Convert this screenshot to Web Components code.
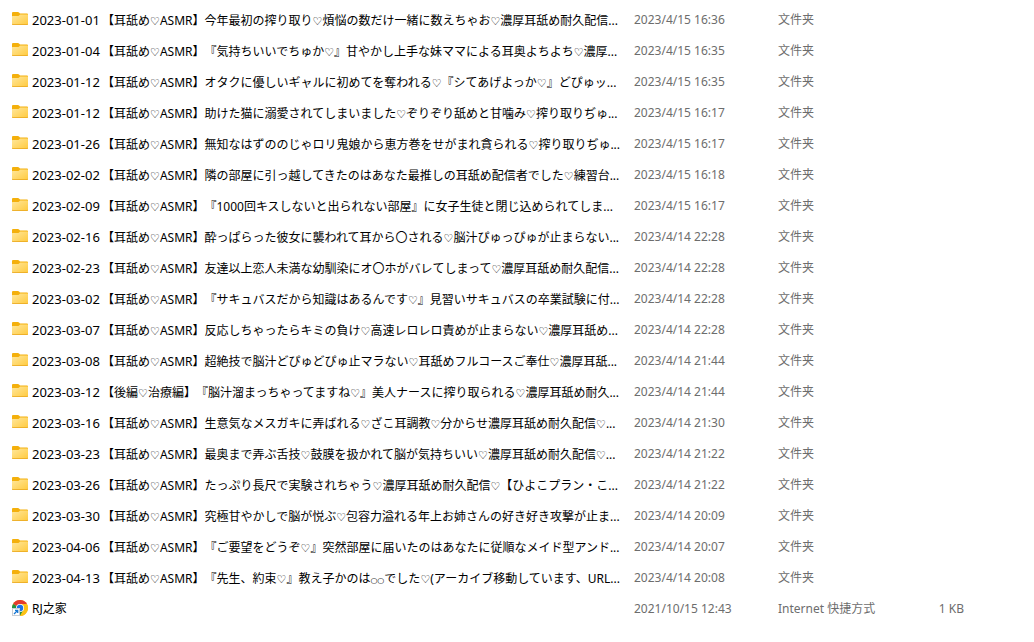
<!DOCTYPE html>
<html lang="zh-CN">
<head>
<meta charset="utf-8">
<title>文件夹</title>
<style>
  body {
    margin: 0;
    background: #fff;
    color: #000;
    font: 12px/16px "Noto Sans", "Noto Sans CJK SC", sans-serif;
  }
</style>
</head>
<body>
<file-list></file-list>

<template id="folder-icon">
  <style>
    :host { display: block; width: 16px; height: 16px; }
    svg { display: block; }
  </style>
  <svg width="16" height="16" viewBox="0 0 16 16" aria-hidden="true">
    <defs>
      <linearGradient id="g" x1="0" y1="0" x2="1" y2="1">
        <stop offset="0" stop-color="#ffe79c"/>
        <stop offset="1" stop-color="#ffca3e"/>
      </linearGradient>
    </defs>
    <path d="M0 2Q0 1 1 1H6Q6.600 1 7 1.500L8 2.500H15Q16 2.500 16 3.500V8H0Z" fill="#f4b00c"/>
    <path d="M0 5.500Q0 5 .5 5H6.500L8.200 3.500H15.500Q16 3.500 16 4V13Q16 14 15 14H1Q0 14 0 13Z" fill="url(#g)"/>
    <path d="M0 12.600Q.2 13.200 1 13.200H15Q15.800 13.200 16 12.600V13Q16 14 15 14H1Q0 14 0 13Z" fill="#e9a71e"/>
  </svg>
</template>

<template id="shortcut-icon">
  <style>
    :host { display: block; width: 16px; height: 16px; }
    svg { display: block; }
  </style>
  <svg width="16" height="16" viewBox="0 0 16 16" aria-hidden="true">
    <circle cx="8" cy="8" r="8" fill="#fbc116"/>
    <path d="M8 8L1.070 4A8 8 0 0 1 14.930 4Z" fill="#e33b2e"/>
    <path d="M8 8L1.070 4A8 8 0 0 0 8 16L11.460 10Z" fill="#229342"/>
    <path d="M8 4H14.930A8 8 0 0 1 8 16L11.460 10Z" fill="#fbc116"/>
    <circle cx="8" cy="8" r="4" fill="#fff"/>
    <circle cx="8" cy="8" r="3.200" fill="#1a73e8"/>
    <rect x=".5" y="8.500" width="7" height="7" fill="#fff" stroke="#c9cdd2"/>
    <path d="M2 14L5.500 10.500M3 10.300H5.700V13" fill="none" stroke="#1677d2" stroke-width="1.300"/>
  </svg>
</template>

<template id="file-name">
  <style>
    :host { display: flex; align-items: center; height: 31px; min-width: 0; white-space: nowrap; }
    .icon { flex: none; width: 20px; }
    .icon ::slotted(*) { margin-bottom: 2px; }
    .text { display: flex; align-items: baseline; min-width: 0; height: 16px; }
    .date { flex: none; width: 70px; font-size: 13px; }
    .title {
      overflow: hidden;
      font-family: "Noto Sans", "Noto Sans CJK JP", sans-serif;
      text-spacing-trim: space-all;
    }
    .heart, .ring { font-family: "DejaVu Sans", sans-serif; line-height: 8px; }
    .heart { font-size: 11px; }
    .ring { font-size: 8px; }
  </style>
  <span class="icon"><slot name="icon"></slot></span>
  <span class="text"><span class="date"></span><span class="title" lang="ja"></span></span>
</template>

<template id="file-list">
  <style>
    :host { display: block; padding: 4px 70px 16px 12px; }
    table { width: 100%; table-layout: fixed; border-collapse: collapse; }
    .c-date { width: 144px; }
    .c-type { width: 120px; }
    .c-size { width: 66px; }
    td { height: 31px; padding: 0; color: #6d6d6d; white-space: nowrap; vertical-align: middle; }
    td:first-child { color: #000; }
    td:last-child { text-align: right; }
  </style>
  <table>
    <colgroup><col><col class="c-date"><col class="c-type"><col class="c-size"></colgroup>
    <tbody></tbody>
  </table>
</template>

<script>
  const clone = id => document.getElementById(id).content.cloneNode(true);

  for (const name of ['folder-icon', 'shortcut-icon']) {
    customElements.define(name, class extends HTMLElement {
      constructor() {
        super();
        this.attachShadow({ mode: 'open' }).append(clone(name));
      }
    });
  }

  customElements.define('file-name', class extends HTMLElement {
    constructor() {
      super();
      this.attachShadow({ mode: 'open' }).append(clone('file-name'));
    }
    connectedCallback() {
      const date = this.shadowRoot.querySelector('.date');
      const title = this.shadowRoot.querySelector('.title');
      const prefix = this.getAttribute('date');
      if (prefix) date.textContent = prefix; else date.remove();
      title.replaceChildren();
      for (const part of this.getAttribute('label').split(/(♡|○+)/)) {
        if (!part) continue;
        const kind = part === '♡' ? 'heart' : part[0] === '○' ? 'ring' : '';
        if (!kind) { title.append(part); continue; }
        const span = document.createElement('span');
        span.className = kind;
        span.textContent = part;
        title.append(span);
      }
    }
  });

  const A = '【耳舐め♡ASMR】';
  const files = [
    ['2023-01-01', A + '今年最初の搾り取り♡煩悩の数だけ一緒に数えちゃお♡濃厚耳舐め耐久配信...', '2023/4/15 16:36'],
    ['2023-01-04', A + '『気持ちいいでちゅか♡』甘やかし上手な妹ママによる耳奥よちよち♡濃厚...', '2023/4/15 16:35'],
    ['2023-01-12', A + 'オタクに優しいギャルに初めてを奪われる♡『シてあげよっか♡』どぴゅッ...', '2023/4/15 16:35'],
    ['2023-01-12', A + '助けた猫に溺愛されてしまいました♡ぞりぞり舐めと甘噛み♡搾り取りぢゅ...', '2023/4/15 16:17'],
    ['2023-01-26', A + '無知なはずののじゃロリ鬼娘から恵方巻をせがまれ貪られる♡搾り取りぢゅ...', '2023/4/15 16:17'],
    ['2023-02-02', A + '隣の部屋に引っ越してきたのはあなた最推しの耳舐め配信者でした♡練習台...', '2023/4/15 16:18'],
    ['2023-02-09', A + '『1000回キスしないと出られない部屋』に女子生徒と閉じ込められてしま...', '2023/4/15 16:17'],
    ['2023-02-16', A + '酔っぱらった彼女に襲われて耳から〇される♡脳汁ぴゅっぴゅが止まらない...', '2023/4/14 22:28'],
    ['2023-02-23', A + '友達以上恋人未満な幼馴染にオ〇ホがバレてしまって♡濃厚耳舐め耐久配信...', '2023/4/14 22:28'],
    ['2023-03-02', A + '『サキュバスだから知識はあるんです♡』見習いサキュバスの卒業試験に付...', '2023/4/14 22:28'],
    ['2023-03-07', A + '反応しちゃったらキミの負け♡高速レロレロ責めが止まらない♡濃厚耳舐め...', '2023/4/14 22:28'],
    ['2023-03-08', A + '超絶技で脳汁どぴゅどぴゅ止マラない♡耳舐めフルコースご奉仕♡濃厚耳舐...', '2023/4/14 21:44'],
    ['2023-03-12', '【後編♡治療編】『脳汁溜まっちゃってますね♡』美人ナースに搾り取られる♡濃厚耳舐め耐久...', '2023/4/14 21:44'],
    ['2023-03-16', A + '生意気なメスガキに弄ばれる♡ざこ耳調教♡分からせ濃厚耳舐め耐久配信♡...', '2023/4/14 21:30'],
    ['2023-03-23', A + '最奥まで弄ぶ舌技♡鼓膜を扱かれて脳が気持ちいい♡濃厚耳舐め耐久配信♡...', '2023/4/14 21:22'],
    ['2023-03-26', A + 'たっぷり長尺で実験されちゃう♡濃厚耳舐め耐久配信♡【ひよこプラン・こ...', '2023/4/14 21:22'],
    ['2023-03-30', A + '究極甘やかしで脳が悦ぶ♡包容力溢れる年上お姉さんの好き好き攻撃が止ま...', '2023/4/14 20:09'],
    ['2023-04-06', A + '『ご要望をどうぞ♡』突然部屋に届いたのはあなたに従順なメイド型アンド...', '2023/4/14 20:07'],
    ['2023-04-13', A + '『先生、約束♡』教え子かのは○○でした♡(アーカイブ移動しています、URL...', '2023/4/14 20:08'],
    ['', 'RJ之家', '2021/10/15 12:43', 'Internet 快捷方式', '1 KB'],
  ];

  customElements.define('file-list', class extends HTMLElement {
    constructor() {
      super();
      this.attachShadow({ mode: 'open' }).append(clone('file-list'));
      const body = this.shadowRoot.querySelector('tbody');
      for (const [date, label, modified, type = '文件夹', size = ''] of files) {
        const row = body.insertRow();
        const name = document.createElement('file-name');
        name.setAttribute('date', date);
        name.setAttribute('label', label);
        const icon = document.createElement(size ? 'shortcut-icon' : 'folder-icon');
        icon.slot = 'icon';
        name.append(icon);
        row.insertCell().append(name);
        row.insertCell().textContent = modified;
        row.insertCell().textContent = type;
        row.insertCell().textContent = size;
      }
    }
  });
</script>
</body>
</html>
